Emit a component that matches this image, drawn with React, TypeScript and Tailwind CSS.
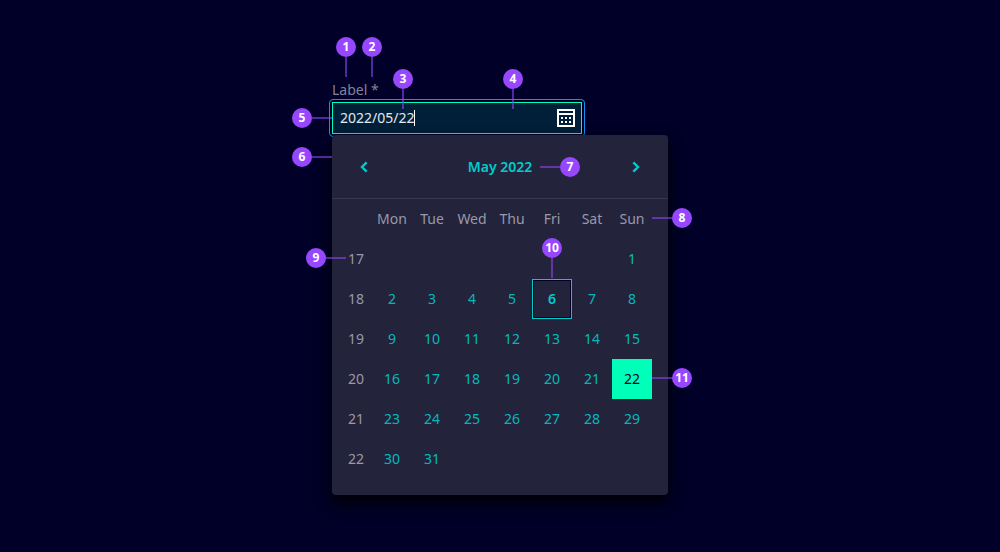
import { useState } from "react";

type Side = "down" | "left" | "right";

const weekdays = ["Mon", "Tue", "Wed", "Thu", "Fri", "Sat", "Sun"];

const weeks: { week: number; days: (number | null)[] }[] = [
  { week: 17, days: [null, null, null, null, null, null, 1] },
  { week: 18, days: [2, 3, 4, 5, 6, 7, 8] },
  { week: 19, days: [9, 10, 11, 12, 13, 14, 15] },
  { week: 20, days: [16, 17, 18, 19, 20, 21, 22] },
  { week: 21, days: [23, 24, 25, 26, 27, 28, 29] },
  { week: 22, days: [30, 31, null, null, null, null, null] },
];

const today = 6;

const callouts: { n: number; place: string; side: Side }[] = [
  { n: 1, place: "left-1 -top-[45px]", side: "down" },
  { n: 2, place: "left-[30px] -top-[45px]", side: "down" },
  { n: 3, place: "left-[61px] -top-[13px]", side: "down" },
  { n: 4, place: "left-[171px] -top-[13px]", side: "down" },
  { n: 5, place: "-left-10 top-[26px]", side: "right" },
  { n: 6, place: "-left-10 top-[65px]", side: "right" },
  { n: 7, place: "left-52 top-[75px]", side: "left" },
  { n: 8, place: "left-80 top-[126px]", side: "left" },
  { n: 9, place: "-left-[26px] top-[166px]", side: "right" },
  { n: 10, place: "left-[210px] top-[156px]", side: "down" },
  { n: 11, place: "left-80 top-[286px]", side: "left" },
];

const direction: Record<Side, string> = {
  down: "flex-col",
  left: "flex-row-reverse",
  right: "flex-row",
};

function Callout({ n, place, side }: { n: number; place: string; side: Side }) {
  return (
    <div className={`pointer-events-none absolute z-20 flex items-center ${direction[side]} ${place}`}>
      <span className="flex size-5 items-center justify-center rounded-full bg-[#9747ff] font-['Open_Sans',sans-serif] text-xs leading-5 font-bold text-white">
        {n}
      </span>
      <span className={`bg-[#9747ff]/55 ${side === "down" ? "h-5 w-0.5" : "h-0.5 w-5"}`} />
    </div>
  );
}

function Chevron({ flip = false }: { flip?: boolean }) {
  return (
    <svg viewBox="0 0 24 24" className="size-6" fill="none" stroke="currentColor" strokeWidth="2.4" aria-hidden="true">
      <path d={flip ? "M9.3 7.3 L14 12 L9.3 16.7" : "M14.7 7.3 L10 12 L14.7 16.7"} />
    </svg>
  );
}

function CalendarIcon() {
  return (
    <svg viewBox="0 0 18 18" className="size-[18px]" fill="currentColor" aria-hidden="true">
      <path fillRule="evenodd" d="M0 0H18V18H0ZM2 2V4H16V2ZM2 6V16H16V6Z" />
      <path d="M4 8h2v2H4zM8 8h2v2H8zM12 8h2v2h-2zM4 12h2v2H4zM8 12h2v2H8zM12 12h2v2h-2z" />
    </svg>
  );
}

export default function App() {
  const [selected, setSelected] = useState(22);
  const value = `2022/05/${String(selected).padStart(2, "0")}`;

  const dayStyle = (day: number) => {
    if (day === selected) return "bg-[#00ffb9] text-[#000028]";
    if (day === today)
      return "border border-[#00cccc] font-semibold text-[#00cccc] inset-ring inset-ring-[#000028]";
    return "text-[#00cccc]/90";
  };

  return (
    <main className="flex min-h-screen justify-center bg-[#000028] pt-[82px] pb-14 font-['Noto_Sans',sans-serif] text-sm">
      <div className="relative w-84">
        <label htmlFor="date" className="mb-1 block leading-4 text-[#83839a]">
          Label *
        </label>

        <div className="relative flex h-8 w-[250px] items-center border border-[#00ffb9] bg-[#001f39] pr-1.5 pl-[7px]">
          <span className="pointer-events-none absolute -inset-1 rounded border border-[#1491eb]" />
          <input
            id="date"
            type="text"
            required
            readOnly
            value={value}
            className="min-w-0 flex-1 bg-transparent text-white/90 outline-none"
          />
          <span className="absolute left-[81px] h-4 w-px bg-white" />
          <button type="button" aria-label="Open calendar" className="text-white">
            <CalendarIcon />
          </button>
        </div>

        <section className="relative z-10 mt-px rounded bg-[#23233c] shadow-[0_8px_16px_rgba(0,0,0,0.9)]">
          <header className="flex h-16 items-center justify-between border-b border-[#37374d] px-4 text-[#00cccc]">
            <button type="button" aria-label="Previous month" className="flex size-8 items-center justify-center">
              <Chevron />
            </button>
            <button type="button" className="font-semibold">
              May 2022
            </button>
            <button type="button" aria-label="Next month" className="flex size-8 items-center justify-center">
              <Chevron flip />
            </button>
          </header>

          <div className="pr-4 pb-4 pl-2">
            <table className="w-full table-fixed border-collapse text-center">
              <thead>
                <tr className="h-10 text-[#9999a9]">
                  <td className="w-8 p-0" />
                  {weekdays.map((day) => (
                    <th key={day} scope="col" className="p-0 font-normal">
                      {day}
                    </th>
                  ))}
                </tr>
              </thead>
              <tbody>
                {weeks.map(({ week, days }) => (
                  <tr key={week} className="h-10">
                    <th scope="row" className="p-0 font-normal text-[#9999a9]">
                      {week}
                    </th>
                    {days.map((day, i) => (
                      <td key={i} className="p-0">
                        {day !== null && (
                          <button
                            type="button"
                            aria-pressed={day === selected}
                            onClick={() => setSelected(day)}
                            className={`block h-10 w-full ${dayStyle(day)}`}
                          >
                            {day}
                          </button>
                        )}
                      </td>
                    ))}
                  </tr>
                ))}
              </tbody>
            </table>
          </div>
        </section>

        {callouts.map((c) => (
          <Callout key={c.n} {...c} />
        ))}
      </div>
    </main>
  );
}
